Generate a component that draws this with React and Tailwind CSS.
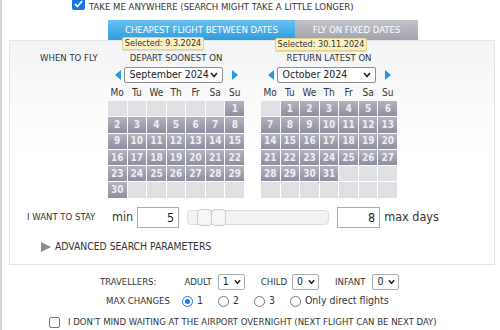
import React from 'react';

const font = { fontFamily: '"DejaVu Sans Condensed", "Liberation Sans", sans-serif' };

function Arrow({ dir }) {
  return (
    <svg width="6" height="10" viewBox="0 0 6 10" className="shrink-0">
      {dir === 'left' ? <path d="M6 0 L0 5 L6 10 Z" fill="#1e9be0" /> : <path d="M0 0 L6 5 L0 10 Z" fill="#1e9be0" />}
    </svg>
  );
}

function Chevron({ w = 8 }) {
  return (
    <svg width={w} height="6" viewBox="0 0 8 6"><path d="M1 1 L4 4.5 L7 1" stroke="#222" strokeWidth="1.6" fill="none" /></svg>
  );
}

function Calendar({ title, month, offset, days }) {
  const cells = [];
  for (let i = 0; i < offset; i++) cells.push(null);
  for (let d = 1; d <= days; d++) cells.push(d);
  while (cells.length < 42) cells.push(null);
  return (
    <div className="flex flex-col items-center w-[134px]">
      <div className="text-[9.5px] text-[#333] leading-[12px] h-[12px] whitespace-nowrap">{title}</div>
      <div className="flex items-center gap-[3px] mt-[3px]">
        <Arrow dir="left" />
        <div className="w-[99px] h-[16px] border border-[#8f8f8f] bg-white flex items-center justify-between pl-[5px] pr-[4px] text-[10.5px] text-[#222] rounded-[2px]">
          <span className="whitespace-nowrap">{month}</span>
          <Chevron />
        </div>
        <span className="w-[3px]" />
        <Arrow dir="right" />
      </div>
      <div className="grid grid-cols-[repeat(7,18.6px)] gap-x-px mt-[5px] text-[10px] text-[#333] text-center leading-none">
        {['Mo', 'Tu', 'We', 'Th', 'Fr', 'Sa', 'Su'].map((d) => (
          <div key={d} className="h-[12px]">{d}</div>
        ))}
      </div>
      <div className="grid grid-cols-[repeat(7,18.6px)] gap-px mt-[1px]">
        {cells.map((d, i) =>
          d ? (
            <div key={i} className="h-[15.3px] bg-gradient-to-b from-[#b3b3c0] to-[#8e8e9e] text-[#eeeef2] text-[10px] font-bold flex items-center justify-center leading-none">
              {d}
            </div>
          ) : (
            <div key={i} className="h-[15.3px] bg-[#dfe0e3]" />
          )
        )}
      </div>
    </div>
  );
}

function Select({ value }) {
  return (
    <div className="w-[27px] h-[16px] border border-[#aaa] bg-white rounded-[2px] flex items-center justify-between pl-[4px] pr-[3px] text-[10.5px] text-[#222]">
      <span>{value}</span>
      <Chevron w={7} />
    </div>
  );
}

function Radio({ checked }) {
  return checked ? (
    <span className="w-[11px] h-[11px] rounded-full border-[1.5px] border-[#1a73e8] bg-white flex items-center justify-center">
      <span className="w-[5px] h-[5px] rounded-full bg-[#1a73e8]" />
    </span>
  ) : (
    <span className="w-[11px] h-[11px] rounded-full border border-[#777] bg-white inline-block" />
  );
}

export default function App() {
  return (
    <div className="w-[500px] h-[330px] overflow-hidden bg-white border-l-2 border-[#d2d3d8]" style={font}>
      {/* take me anywhere */}
      <div className="flex items-start h-[12px] pl-[70px]">
        <span className="mt-[-3px] w-[13px] h-[13px] rounded-[2px] bg-[#1a73e8] flex items-center justify-center">
          <svg width="9" height="8" viewBox="0 0 9 8"><path d="M1 4 L3.5 6.5 L8 1.2" stroke="white" strokeWidth="1.8" fill="none" /></svg>
        </span>
        <span className="ml-[4px] pt-[1px] text-[9.5px] leading-[11px] text-[#333] whitespace-nowrap">TAKE ME ANYWHERE (SEARCH MIGHT TAKE A LITTLE LONGER)</span>
      </div>

      {/* tabs */}
      <div className="flex ml-[106px] mt-[8px] h-[20px]">
        <div className="w-[187px] bg-gradient-to-b from-[#66c0f0] to-[#2d9de0] text-white text-[9.5px] flex items-center justify-center whitespace-nowrap">
          CHEAPEST FLIGHT BETWEEN DATES
        </div>
        <div className="w-[123px] bg-gradient-to-b from-[#c3c3cc] to-[#a2a2ae] text-white text-[9.5px] flex items-center justify-center whitespace-nowrap">
          FLY ON FIXED DATES
        </div>
      </div>

      {/* panel */}
      <div className="relative ml-[7px] w-[486px] h-[225px] border border-[#e4e4e4] bg-gradient-to-b from-[#f3f4f5] via-white to-white">
        <div className="absolute left-[112px] top-[-4px] w-[82px] h-[13px] bg-[#fdf1c2] border border-[#e3d08c] rounded-[2px] shadow-[0_1px_1px_rgba(0,0,0,0.12)] text-[9px] text-[#333] leading-[11px] text-center whitespace-nowrap">Selected: 9.3.2024</div>
        <div className="absolute left-[265px] top-[-3px] w-[92px] h-[13px] bg-[#fdf1c2] border border-[#e3d08c] rounded-[2px] shadow-[0_1px_1px_rgba(0,0,0,0.12)] text-[9px] text-[#333] leading-[11px] text-center whitespace-nowrap">Selected: 30.11.2024</div>

        <div className="flex pt-[11px]">
          <div className="w-[99px] pl-[30px] text-[9.5px] leading-[12px] text-[#333] whitespace-nowrap">WHEN TO FLY</div>
          <Calendar title="DEPART SOONEST ON" month="September 2024" offset={6} days={30} />
          <div className="w-[19px]" />
          <Calendar title="RETURN LATEST ON" month="October 2024" offset={1} days={31} />
        </div>

        <div className="flex items-center mt-[9px] h-[21px]">
          <div className="w-[102px] pl-[17px] text-[9.5px] text-[#333] whitespace-nowrap">I WANT TO STAY</div>
          <span className="text-[12.5px] text-[#333]">min</span>
          <div className="ml-[4px] w-[42px] h-[21px] border border-[#aaa] bg-white text-right pr-[4px] text-[12.5px] text-[#222] leading-[19px]">5</div>
          <div className="ml-[8px] w-[142px] h-[15px] rounded-[4px] border border-[#ddd] bg-[#f2f2f2] relative">
            <span className="absolute left-[9px] top-[-2px] w-[15px] h-[17px] rounded-[4px] border border-[#ccc] bg-[#f6f6f6]" />
            <span className="absolute left-[23px] top-[-2px] w-[15px] h-[17px] rounded-[4px] border border-[#ccc] bg-[#f6f6f6]" />
          </div>
          <div className="ml-[8px] w-[43px] h-[21px] border border-[#aaa] bg-white text-right pr-[4px] text-[12.5px] text-[#222] leading-[19px]">8</div>
          <span className="ml-[4px] text-[12.5px] text-[#333]">max days</span>
        </div>

        <div className="flex items-center gap-[4px] pl-[31px] mt-[11px]">
          <svg width="10" height="10" viewBox="0 0 10 10"><path d="M0 0 L10 5 L0 10 Z" fill="#8a8a96" /></svg>
          <span className="text-[10.3px] text-[#333] whitespace-nowrap">ADVANCED SEARCH PARAMETERS</span>
        </div>
      </div>

      {/* travellers */}
      <div className="flex items-center mt-[9px] h-[16px] text-[9.5px] text-[#333]">
        <span className="ml-[98px]">TRAVELLERS:</span>
        <span className="ml-[28px]">ADULT</span>
        <span className="ml-[6px]"><Select value="1" /></span>
        <span className="ml-[16px]">CHILD</span>
        <span className="ml-[5px]"><Select value="0" /></span>
        <span className="ml-[16px]">INFANT</span>
        <span className="ml-[7px]"><Select value="0" /></span>
      </div>
      <div className="flex items-center mt-[3px] h-[16px] text-[9.5px] text-[#333]">
        <span className="ml-[104px]">MAX CHANGES</span>
        <span className="ml-[12px] flex items-center gap-[4px]"><Radio checked /><span className="text-[10.5px]">1</span></span>
        <span className="ml-[15px] flex items-center gap-[4px]"><Radio /><span className="text-[10.5px]">2</span></span>
        <span className="ml-[15px] flex items-center gap-[4px]"><Radio /><span className="text-[10.5px]">3</span></span>
        <span className="ml-[15px] flex items-center gap-[4px]"><Radio /><span className="text-[10.5px]">Only direct flights</span></span>
      </div>
      <div className="flex items-center mt-[6px] h-[14px]">
        <span className="ml-[47px] w-[11px] h-[11px] border border-[#777] rounded-[2px] bg-white" />
        <span className="ml-[8px] text-[9.5px] text-[#333] whitespace-nowrap">I DON'T MIND WAITING AT THE AIRPORT OVERNIGHT (NEXT FLIGHT CAN BE NEXT DAY)</span>
      </div>
    </div>
  );
}
